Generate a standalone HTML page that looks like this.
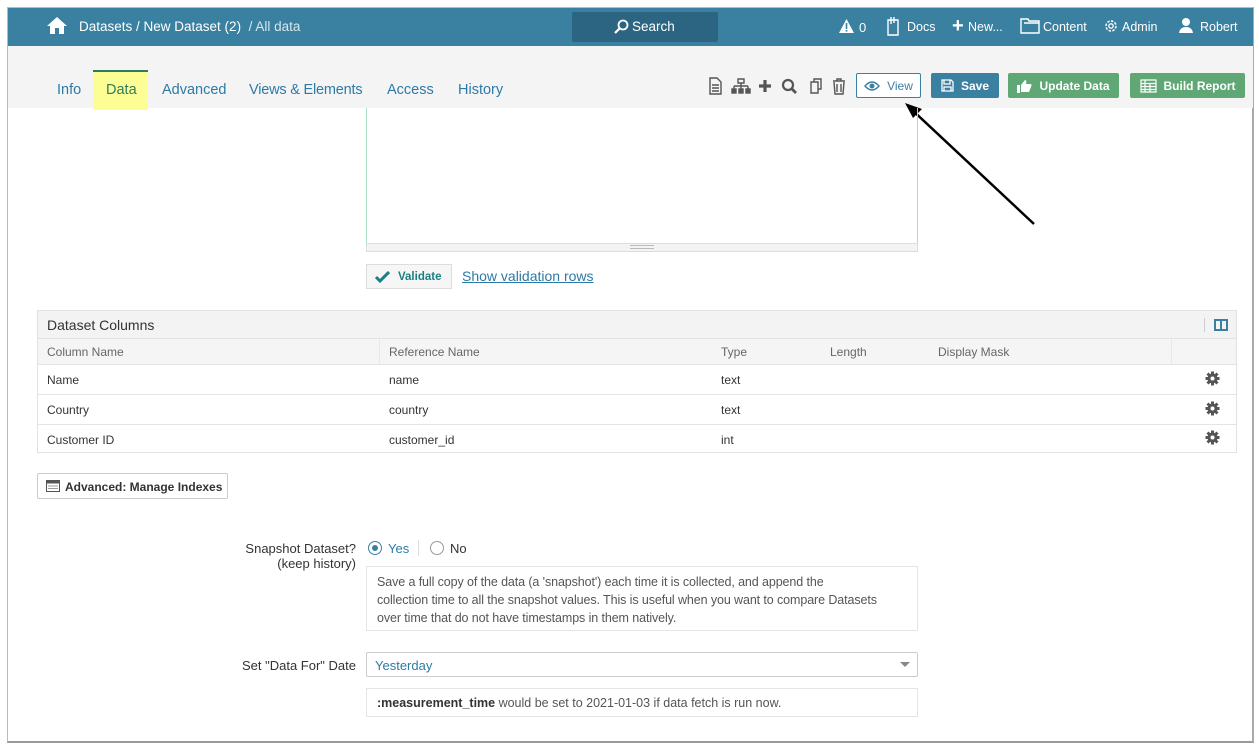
<!DOCTYPE html>
<html><head><style>
*{box-sizing:border-box;margin:0;padding:0}
body{width:1259px;height:746px;background:#fff;font-family:"Liberation Sans",sans-serif;position:relative;overflow:hidden;color:#333}
.a{position:absolute}
.frame{left:7px;top:7px;width:1247px;height:736px;border:1px solid #bbb;border-right:2px solid #aaa;border-bottom:2px solid #999}
.hdr{left:8px;top:8px;width:1245px;height:38px;background:#3a80a1;color:#fff;font-size:13.5px}
.tabs{left:8px;top:46px;width:1245px;height:62px;background:#f4f4f4}
.tab{position:absolute;top:82px;font-size:14.5px;color:#2e7aa6}
.btn{position:absolute;top:73px;height:25px;border-radius:2px;color:#fff;font-size:12px;font-weight:bold;display:flex;align-items:center;justify-content:center;gap:7px}
.tb{left:37px;top:310px;width:1200px;border:1px solid #e2e2e2}
.row{position:absolute;left:0;width:1198px;height:29px;border-top:1px solid #e4e4e4;font-size:12px}
.row span{position:absolute;top:8px}
.gear{position:absolute;left:1167px;top:7px}
</style></head><body>
<div class="a frame"></div>
<div class="a hdr">
 <svg class="a" style="left:38px;top:8px" width="22" height="19" viewBox="0 0 22 19"><path d="M11 1 L1 10 L4 10 L4 18 L9 18 L9 12 L13 12 L13 18 L18 18 L18 10 L21 10 Z" fill="#fff"/></svg>
 <span class="a" style="left:71px;top:11px">Datasets / New Dataset (2) &nbsp;<span style="color:#d7e6ee">/ All data</span></span>
 <div class="a" style="left:564px;top:4px;width:146px;height:30px;background:#2b6582;border-radius:2px"></div>
 <svg class="a" style="left:605px;top:11px" width="16" height="16" viewBox="0 0 16 16"><circle cx="10" cy="6" r="4.5" stroke="#fff" stroke-width="1.8" fill="none"/><path d="M7 9 L2 14" stroke="#fff" stroke-width="2.2"/></svg>
 <span class="a" style="left:624px;top:11px">Search</span>
 <svg class="a" style="left:830px;top:10px" width="17" height="16" viewBox="0 0 17 16"><path d="M8.5 1 L16 15 L1 15Z" fill="#fff"/><rect x="7.7" y="5" width="1.6" height="6" fill="#3a80a1"/><rect x="7.7" y="12" width="1.6" height="1.6" fill="#3a80a1"/></svg>
 <span class="a" style="left:851px;top:12px;font-size:13px">0</span>
 <svg class="a" style="left:878px;top:8px" width="14" height="20" viewBox="0 0 14 20"><path d="M2 4 H12 V19 H2Z M5 1 V8 M8 1 V7" stroke="#fff" stroke-width="1.4" fill="none"/></svg>
 <span class="a" style="left:899px;top:12px;font-size:12.5px">Docs</span>
 <span class="a" style="left:944px;top:7px;font-size:20px;font-weight:bold">+</span>
 <span class="a" style="left:960px;top:12px;font-size:12.5px">New...</span>
 <svg class="a" style="left:1012px;top:9px" width="20" height="17" viewBox="0 0 20 17"><path d="M1 2 H8 L9 4 H19 V16 H1Z M4 6 H19" stroke="#fff" stroke-width="1.4" fill="none"/></svg>
 <span class="a" style="left:1035px;top:12px;font-size:12.5px">Content</span>
 <svg class="a" style="left:1095px;top:10px" width="16" height="16" viewBox="0 0 16 16"><circle cx="8" cy="8" r="5" stroke="#fff" stroke-width="1.5" fill="none" stroke-dasharray="2.5 1.4"/><circle cx="8" cy="8" r="2.2" stroke="#fff" stroke-width="1.3" fill="none"/></svg>
 <span class="a" style="left:1114px;top:12px;font-size:12.5px">Admin</span>
 <svg class="a" style="left:1170px;top:9px" width="16" height="17" viewBox="0 0 16 17"><circle cx="8" cy="5" r="4" fill="#fff"/><path d="M1 16 Q2 10 8 10 Q14 10 15 16Z" fill="#fff"/></svg>
 <span class="a" style="left:1192px;top:12px;font-size:12.5px">Robert</span>
</div>
<div class="a tabs"></div>
<div class="a" style="left:93px;top:70px;width:55px;height:40px;background:#fdfd96;border-top:2px solid #2e7d5a"></div>
<span class="tab" style="left:57px">Info</span>
<span class="tab" style="left:106px;color:#2e7d5a">Data</span>
<span class="tab" style="left:162px">Advanced</span>
<span class="tab" style="left:249px;letter-spacing:-0.2px">Views &amp; Elements</span>
<span class="tab" style="left:387px">Access</span>
<span class="tab" style="left:458px">History</span>
<svg class="a" style="left:708px;top:77px" width="140" height="18" viewBox="0 0 140 18" fill="none" stroke="#555" stroke-width="1.4">
 <path d="M2 1 H9 L13 5 V17 H2Z M4 8 H11 M4 11 H11 M4 14 H11"/>
 <path d="M30 2 H36 V6 H30Z M33 6 V9 M26 9 H40 M26 9 V12 M33 9 V12 M40 9 V12" /><rect x="24" y="12" width="4" height="4" fill="#555"/><rect x="31" y="12" width="4" height="4" fill="#555"/><rect x="38" y="12" width="4" height="4" fill="#555"/>
 <path d="M57 3 V15 M51 9 H63" stroke-width="3.2"/>
 <circle cx="80" cy="8" r="5" stroke-width="2.2"/><path d="M84 12 L88 16" stroke-width="2.8"/>
 <path d="M103 5 H110 V16 H103Z M106 5 V2 H113 V12 H110"/>
 <path d="M125 4 H137 M129 4 V2 H133 V4 M126 5 L127 17 H135 L136 5 M129 7 V15 M133 7 V15"/>
</svg>
<div class="btn" style="left:856px;width:65px;border:1px solid #3a80a1;background:#fff;color:#3a80a1;font-weight:normal">
 <svg width="16" height="12" viewBox="0 0 16 12"><path d="M1 6 Q8 -2 15 6 Q8 14 1 6Z" stroke="#3a80a1" stroke-width="1.4" fill="none"/><circle cx="8" cy="6" r="2.5" fill="#3a80a1"/></svg>View</div>
<div class="btn" style="left:931px;width:68px;background:#3a80a1">
 <svg width="13" height="13" viewBox="0 0 13 13"><path d="M1 1 H10 L12 3 V12 H1Z M3 1 V5 H9 V1 M3 8 H10 V12 H3Z" stroke="#fff" stroke-width="1.3" fill="none"/></svg>Save</div>
<div class="btn" style="left:1008px;width:111px;background:#5fa774">
 <svg width="15" height="14" viewBox="0 0 15 14"><rect x="0" y="6" width="3" height="8" fill="#fff"/><path d="M4 6 L8 1 Q10 1 9 5 H14 Q15 6 14 8 L12 13 H4Z" fill="#fff"/></svg>Update Data</div>
<div class="btn" style="left:1130px;width:115px;background:#5fa774">
 <svg width="17" height="14" viewBox="0 0 17 14"><path d="M1 1 H16 V13 H1Z M1 4.5 H16 M1 7.5 H16 M1 10.5 H16 M5 1 V13 M10 4.5 V13" stroke="#fff" stroke-width="1.2" fill="none"/></svg>Build Report</div>
<svg class="a" style="left:895px;top:95px" width="150" height="140"><path d="M139 129 L14 12" stroke="#000" stroke-width="2.5"/><path d="M10 8 L27 14 L18 23Z" fill="#000"/></svg>
<div class="a" style="left:366px;top:108px;width:552px;height:144px;border:1px solid #aaddc4;border-top:none"></div>
<div class="a" style="left:366px;top:243px;width:552px;height:9px;background:#f3f3f3;border:1px solid #ddd"></div>
<div class="a" style="left:630px;top:245px;width:24px;height:4px;border-top:1px solid #bbb;border-bottom:1px solid #bbb"></div>
<div class="a" style="left:366px;top:264px;width:86px;height:25px;border:1px solid #ddd;background:#f6f6f6;font-size:11.5px;font-weight:bold;color:#1b8080;padding:6px 0 0 8px;display:flex;gap:8px">
 <svg width="15" height="12" viewBox="0 0 15 12"><path d="M1 6 L5 10 L14 1" stroke="#1b8080" stroke-width="3" fill="none"/></svg>Validate</div>
<span class="a" style="left:462px;top:268px;font-size:14px;color:#2e7aa6;text-decoration:underline">Show validation rows</span>
<div class="a tb" style="height:143px">
 <div class="a" style="left:0;top:0;width:1198px;height:28px;background:#f3f3f3;border-bottom:1px solid #e2e2e2;font-size:14px;padding:6px 0 0 9px">Dataset Columns</div>
 <div class="a" style="left:1166px;top:7px;width:1px;height:14px;background:#ccc"></div>
 <div class="a" style="left:1176px;top:8px;width:14px;height:12px;border:2px solid #3a80a1"></div><div class="a" style="left:1182px;top:8px;width:2px;height:12px;background:#3a80a1"></div>
 <div class="a" style="left:0;top:28px;width:1198px;height:25px;background:#f5f5f5;font-size:12px;color:#666">
  <span class="a" style="left:9px;top:6px">Column Name</span><span class="a" style="left:351px;top:6px">Reference Name</span><span class="a" style="left:683px;top:6px">Type</span><span class="a" style="left:792px;top:6px">Length</span><span class="a" style="left:900px;top:6px">Display Mask</span>
  <div class="a" style="left:341px;top:0;width:1px;height:25px;background:#e8e8e8"></div><div class="a" style="left:1133px;top:0;width:1px;height:25px;background:#e8e8e8"></div>
 </div>
 <div class="row" style="top:53px"><span style="left:9px">Name</span><span style="left:351px">name</span><span style="left:683px">text</span></div>
 <div class="row" style="top:83px"><span style="left:9px">Country</span><span style="left:351px">country</span><span style="left:683px">text</span></div>
 <div class="row" style="top:113px"><span style="left:9px">Customer ID</span><span style="left:351px">customer_id</span><span style="left:683px">int</span></div>
</div>
<svg class="a" style="left:1205px;top:371px" width="15" height="75" viewBox="0 0 15 75">
 <defs><g id="g"><circle cx="7.5" cy="7.5" r="5" fill="#555"/><path d="M7.5 0.5 V14.5 M0.5 7.5 H14.5 M2.5 2.5 L12.5 12.5 M12.5 2.5 L2.5 12.5" stroke="#555" stroke-width="3"/><circle cx="7.5" cy="7.5" r="2" fill="#fff"/></g></defs>
 <use href="#g" y="0"/><use href="#g" y="30"/><use href="#g" y="59"/>
</svg>
<div class="a" style="left:37px;top:473px;width:191px;height:26px;border:1px solid #ccc;border-radius:2px;font-size:12px;font-weight:bold;padding:6px 0 0 8px;display:flex;gap:5px">
 <svg width="14" height="12" viewBox="0 0 14 12"><rect x="0.5" y="0.5" width="13" height="11" fill="none" stroke="#555"/><rect x="0.5" y="0.5" width="13" height="3" fill="#555"/><path d="M2 6 H12 M2 8.5 H12" stroke="#999"/></svg>Advanced: Manage Indexes</div>
<div class="a" style="left:200px;top:541px;width:156px;text-align:right;font-size:13px;line-height:15px">Snapshot Dataset?<br>(keep history)</div>
<div class="a" style="left:368px;top:541px;width:14px;height:14px;border:1px solid #3a80a1;border-radius:50%"></div><div class="a" style="left:372px;top:545px;width:6px;height:6px;background:#3a80a1;border-radius:50%"></div>
<span class="a" style="left:388px;top:541px;font-size:13px;color:#2e7aa6">Yes</span>
<div class="a" style="left:418px;top:540px;width:1px;height:16px;background:#ddd"></div>
<div class="a" style="left:430px;top:541px;width:14px;height:14px;border:1px solid #999;border-radius:50%"></div>
<span class="a" style="left:450px;top:541px;font-size:13px">No</span>
<div class="a" style="left:366px;top:566px;width:552px;height:65px;border:1px solid #e5e5e5;font-size:12.5px;line-height:18px;color:#555;padding:6px 40px 0 10px;letter-spacing:-0.1px">Save a full copy of the data (a 'snapshot') each time it is collected, and append the collection time to all the snapshot values. This is useful when you want to compare Datasets over time that do not have timestamps in them natively.</div>
<span class="a" style="left:242px;top:658px;font-size:13px">Set "Data For" Date</span>
<div class="a" style="left:366px;top:652px;width:552px;height:25px;border:1px solid #ccc;border-radius:2px;font-size:13px;color:#2e7aa6;padding:5px 0 0 8px">Yesterday</div>
<div class="a" style="left:900px;top:662px;border:5px solid transparent;border-top:5px solid #888"></div>
<div class="a" style="left:366px;top:688px;width:552px;height:29px;border:1px solid #e5e5e5;font-size:12.5px;color:#555;padding:7px 0 0 10px"><b style="color:#333">:measurement_time</b> would be set to 2021-01-03 if data fetch is run now.</div>
</body></html>
